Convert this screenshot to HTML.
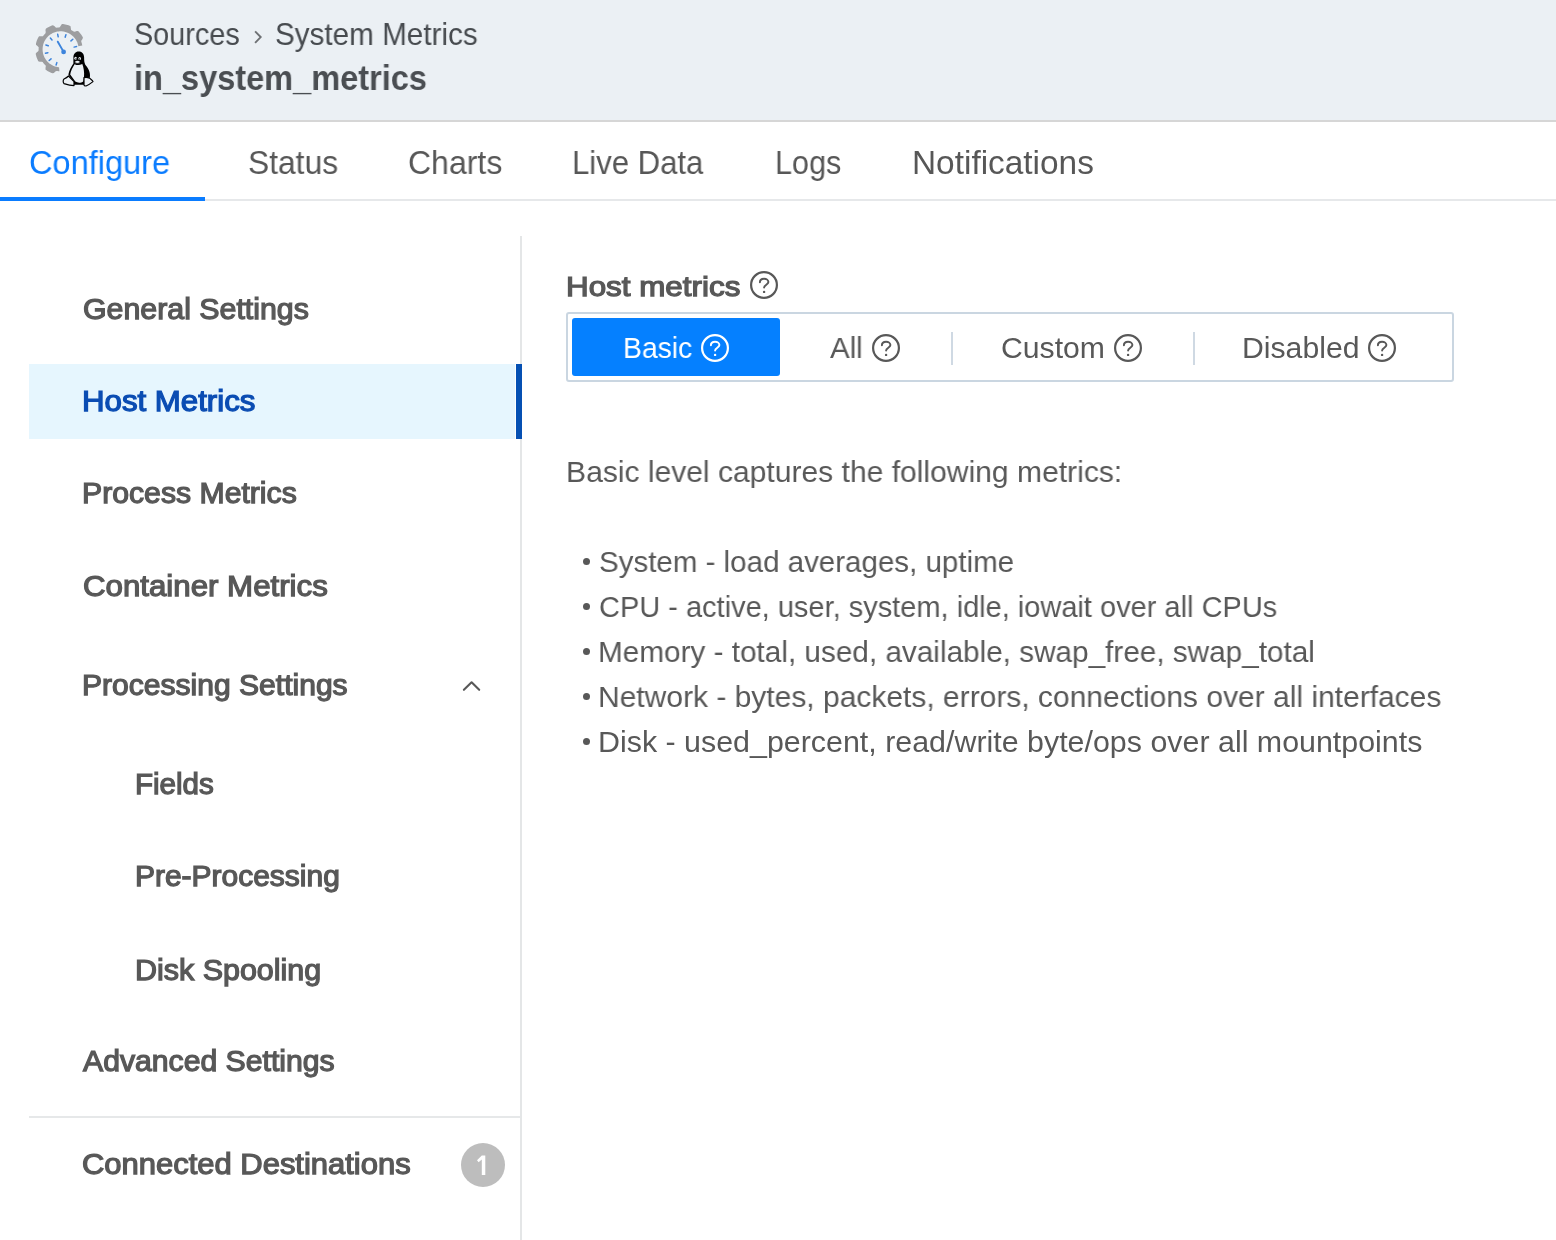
<!DOCTYPE html>
<html><head><meta charset="utf-8"><title>in_system_metrics</title><style>
html,body{margin:0;padding:0;}
body{width:1556px;height:1240px;position:relative;overflow:hidden;background:#fff;font-family:"Liberation Sans",sans-serif;}
.a{position:absolute;white-space:nowrap;line-height:1;transform-origin:0 0;will-change:transform;}
.r{position:absolute;}
.q{position:absolute;}
</style></head><body>
<div class="r" style="left:0px;top:0px;width:1556px;height:120px;background:#ebf0f4;"></div>
<div class="r" style="left:0px;top:120px;width:1556px;height:2px;background:#d6d6d6;"></div>
<div class="r" style="left:0px;top:199px;width:1556px;height:2px;background:#e6e8ea;"></div>
<div class="r" style="left:0px;top:197px;width:205px;height:4px;background:#0a7cff;"></div>
<div class="r" style="left:520px;top:236px;width:2px;height:1004px;background:#e4e6e7;"></div>
<div class="r" style="left:29px;top:364px;width:486px;height:75px;background:#e6f6fe;"></div>
<div class="r" style="left:516px;top:364px;width:6px;height:75px;background:#0550b3;"></div>
<div class="r" style="left:29px;top:1116px;width:491px;height:2px;background:#e6e8e9;"></div>
<div class="r" style="left:461px;top:1143px;width:44px;height:44px;background:#bdbdbd;border-radius:50%;"></div>
<div class="r" style="left:566px;top:312px;width:884px;height:66px;background:transparent;border:2px solid #cad6e1;border-radius:3px;"></div>
<div class="r" style="left:572px;top:318px;width:208px;height:58px;background:#0580ff;border-radius:3px;"></div>
<div class="r" style="left:951px;top:332px;width:2px;height:33px;background:#cfd9e3;"></div>
<div class="r" style="left:1193px;top:332px;width:2px;height:33px;background:#cfd9e3;"></div>
<div class="a" style="left:134.3px;top:19.0px;font-size:30.5px;font-weight:400;color:#474b4f;transform:scaleX(0.9444)">Sources</div>
<div class="a" style="left:274.5px;top:19.0px;font-size:30.5px;font-weight:400;color:#474b4f;transform:scaleX(0.9722)">System Metrics</div>
<div class="a" style="left:133.5px;top:59.9px;font-size:35.2px;font-weight:700;color:#4a4e52;transform:scaleX(0.9245)">in_system_metrics</div>
<div class="a" style="left:29.1px;top:146.2px;font-size:33.4px;font-weight:400;color:#0a7cff;transform:scaleX(0.9746)">Configure</div>
<div class="a" style="left:248.4px;top:146.2px;font-size:33.4px;font-weight:400;color:#575757;transform:scaleX(0.9519)">Status</div>
<div class="a" style="left:408.2px;top:146.2px;font-size:33.4px;font-weight:400;color:#575757;transform:scaleX(0.9591)">Charts</div>
<div class="a" style="left:572.1px;top:146.2px;font-size:33.4px;font-weight:400;color:#575757;transform:scaleX(0.9308)">Live Data</div>
<div class="a" style="left:775.0px;top:146.2px;font-size:33.4px;font-weight:400;color:#575757;transform:scaleX(0.9156)">Logs</div>
<div class="a" style="left:911.6px;top:146.2px;font-size:33.4px;font-weight:400;color:#575757;transform:scaleX(0.9976)">Notifications</div>
<div class="a" style="left:82.6px;top:294.9px;font-size:28.6px;font-weight:400;color:#585858;-webkit-text-stroke:1.25px #585858;transform:scaleX(1.0604)">General Settings</div>
<div class="a" style="left:82.0px;top:387.3px;font-size:28.7px;font-weight:400;color:#0b4db3;-webkit-text-stroke:1.25px #0b4db3;transform:scaleX(1.0876)">Host Metrics</div>
<div class="a" style="left:82.1px;top:479.1px;font-size:28.6px;font-weight:400;color:#585858;-webkit-text-stroke:1.25px #585858;transform:scaleX(1.0561)">Process Metrics</div>
<div class="a" style="left:83.0px;top:571.8px;font-size:28.6px;font-weight:400;color:#585858;-webkit-text-stroke:1.25px #585858;transform:scaleX(1.0924)">Container Metrics</div>
<div class="a" style="left:81.5px;top:671.1px;font-size:28.6px;font-weight:400;color:#585858;-webkit-text-stroke:1.25px #585858;transform:scaleX(1.0512)">Processing Settings</div>
<div class="a" style="left:134.5px;top:770.1px;font-size:28.7px;font-weight:400;color:#585858;-webkit-text-stroke:1.25px #585858;transform:scaleX(1.0299)">Fields</div>
<div class="a" style="left:134.5px;top:861.8px;font-size:28.6px;font-weight:400;color:#585858;-webkit-text-stroke:1.25px #585858;transform:scaleX(1.0478)">Pre-Processing</div>
<div class="a" style="left:134.5px;top:955.8px;font-size:28.7px;font-weight:400;color:#585858;-webkit-text-stroke:1.25px #585858;transform:scaleX(1.0614)">Disk Spooling</div>
<div class="a" style="left:82.9px;top:1047.3px;font-size:28.7px;font-weight:400;color:#585858;-webkit-text-stroke:1.25px #585858;transform:scaleX(1.052)">Advanced Settings</div>
<div class="a" style="left:82.4px;top:1150.1px;font-size:28.6px;font-weight:400;color:#585858;-webkit-text-stroke:1.25px #585858;transform:scaleX(1.0825)">Connected Destinations</div>
<div class="a" style="left:565.8px;top:272.6px;font-size:27.7px;font-weight:400;color:#585858;-webkit-text-stroke:1.25px #585858;transform:scaleX(1.1331)">Host metrics</div>
<div class="a" style="left:622.5px;top:333.2px;font-size:30.2px;font-weight:400;color:#ffffff;transform:scaleX(0.9371)">Basic</div>
<div class="a" style="left:830.4px;top:333.2px;font-size:30.2px;font-weight:400;color:#585858;transform:scaleX(0.9755)">All</div>
<div class="a" style="left:1001.2px;top:333.2px;font-size:30.2px;font-weight:400;color:#585858;transform:scaleX(0.9978)">Custom</div>
<div class="a" style="left:1242.3px;top:333.2px;font-size:30.2px;font-weight:400;color:#585858;transform:scaleX(0.9988)">Disabled</div>
<div class="a" style="left:566.1px;top:457.0px;font-size:30.2px;font-weight:400;color:#585858;transform:scaleX(0.9955)">Basic level captures the following metrics:</div>
<div class="a" style="left:598.5px;top:546.0px;font-size:30.4px;font-weight:400;color:#585858;transform:scaleX(0.9712)">System - load averages, uptime</div>
<div class="a" style="left:598.5px;top:591.0px;font-size:30.4px;font-weight:400;color:#585858;transform:scaleX(0.9539)">CPU - active, user, system, idle, iowait over all CPUs</div>
<div class="a" style="left:597.5px;top:636.0px;font-size:30.4px;font-weight:400;color:#585858;transform:scaleX(0.9779)">Memory - total, used, available, swap_free, swap_total</div>
<div class="a" style="left:597.5px;top:681.0px;font-size:30.4px;font-weight:400;color:#585858;transform:scaleX(0.9868)">Network - bytes, packets, errors, connections over all interfaces</div>
<div class="a" style="left:597.5px;top:726.0px;font-size:30.4px;font-weight:400;color:#585858;transform:scaleX(1.0001)">Disk - used_percent, read/write byte/ops over all mountpoints</div>
<svg class="q" style="left:252px;top:29px" width="12" height="16" viewBox="0 0 12 16"><path d="M3.1 2.3 L8.7 8.1 L3.1 13.9" fill="none" stroke="#6e7174" stroke-width="1.9"/></svg>
<svg class="q" style="left:460px;top:677px" width="24" height="16" viewBox="0 0 24 16"><path d="M3.9 12.8 L11.6 5.3 L19.2 12.8" fill="none" stroke="#585858" stroke-width="2.1" stroke-linecap="round" stroke-linejoin="round"/></svg>
<svg class="q" style="left:470px;top:1150px" width="26" height="30" viewBox="0 0 26 30"><path d="M11.8 5.6 L15.3 5.6 L15.3 25 L11.8 25 L11.8 9.6 L8.6 12.2 L7 10.2 Z" fill="#fff"/></svg>
<div class="r" style="left:582.8px;top:557.8px;width:7px;height:7px;border-radius:50%;background:#585858"></div>
<div class="r" style="left:582.8px;top:602.8px;width:7px;height:7px;border-radius:50%;background:#585858"></div>
<div class="r" style="left:582.8px;top:647.8px;width:7px;height:7px;border-radius:50%;background:#585858"></div>
<div class="r" style="left:582.8px;top:692.8px;width:7px;height:7px;border-radius:50%;background:#585858"></div>
<div class="r" style="left:582.8px;top:737.8px;width:7px;height:7px;border-radius:50%;background:#585858"></div>
<svg class="q" style="left:750.1px;top:271.1px" width="28" height="28" viewBox="0 0 28 28"><circle cx="14" cy="14" r="12.9" fill="none" stroke="#585858" stroke-width="2.2"/><path d="M9.9 11.3 C9.9 9.2 11.7 7.7 14.1 7.7 C16.5 7.7 18.4 9.2 18.4 11.1 C18.4 13.5 14.1 14 14.1 16.6" fill="none" stroke="#585858" stroke-width="1.95" stroke-linecap="round"/><circle cx="14.1" cy="20.9" r="1.2" fill="#585858"/></svg>
<svg class="q" style="left:701px;top:333.6px" width="28" height="28" viewBox="0 0 28 28"><circle cx="14" cy="14" r="12.9" fill="none" stroke="#ffffff" stroke-width="2.2"/><path d="M9.9 11.3 C9.9 9.2 11.7 7.7 14.1 7.7 C16.5 7.7 18.4 9.2 18.4 11.1 C18.4 13.5 14.1 14 14.1 16.6" fill="none" stroke="#ffffff" stroke-width="1.95" stroke-linecap="round"/><circle cx="14.1" cy="20.9" r="1.2" fill="#ffffff"/></svg>
<svg class="q" style="left:872px;top:333.6px" width="28" height="28" viewBox="0 0 28 28"><circle cx="14" cy="14" r="12.9" fill="none" stroke="#585858" stroke-width="2.2"/><path d="M9.9 11.3 C9.9 9.2 11.7 7.7 14.1 7.7 C16.5 7.7 18.4 9.2 18.4 11.1 C18.4 13.5 14.1 14 14.1 16.6" fill="none" stroke="#585858" stroke-width="1.95" stroke-linecap="round"/><circle cx="14.1" cy="20.9" r="1.2" fill="#585858"/></svg>
<svg class="q" style="left:1114px;top:333.6px" width="28" height="28" viewBox="0 0 28 28"><circle cx="14" cy="14" r="12.9" fill="none" stroke="#585858" stroke-width="2.2"/><path d="M9.9 11.3 C9.9 9.2 11.7 7.7 14.1 7.7 C16.5 7.7 18.4 9.2 18.4 11.1 C18.4 13.5 14.1 14 14.1 16.6" fill="none" stroke="#585858" stroke-width="1.95" stroke-linecap="round"/><circle cx="14.1" cy="20.9" r="1.2" fill="#585858"/></svg>
<svg class="q" style="left:1368px;top:333.6px" width="28" height="28" viewBox="0 0 28 28"><circle cx="14" cy="14" r="12.9" fill="none" stroke="#585858" stroke-width="2.2"/><path d="M9.9 11.3 C9.9 9.2 11.7 7.7 14.1 7.7 C16.5 7.7 18.4 9.2 18.4 11.1 C18.4 13.5 14.1 14 14.1 16.6" fill="none" stroke="#585858" stroke-width="1.95" stroke-linecap="round"/><circle cx="14.1" cy="20.9" r="1.2" fill="#585858"/></svg>
<svg class="q" style="left:0;top:0" width="110" height="100" viewBox="0 0 110 100">
<path d="M82.27 45.48 L82.07 44.51 L81.84 43.55 L81.56 42.61 L81.24 41.67 L81.39 40.54 L82.51 38.89 L82.94 37.43 L82.39 36.44 L81.79 35.47 L81.15 34.54 L80.46 33.63 L79.74 32.76 L78.98 31.91 L78.18 31.11 L76.67 31.10 L74.77 31.72 L73.63 31.57 L72.82 31.01 L71.99 30.48 L71.13 29.98 L70.83 28.36 L70.55 26.37 L69.62 25.66 L68.55 25.28 L67.47 24.95 L66.37 24.67 L65.26 24.43 L64.14 24.25 L63.01 24.12 L61.88 24.10 L60.74 25.76 L59.74 27.32 L58.76 27.38 L57.77 27.48 L56.80 27.63 L55.76 27.49 L54.34 26.09 L52.92 25.19 L51.85 25.56 L50.80 25.98 L49.76 26.44 L48.75 26.95 L47.76 27.50 L46.79 28.10 L45.85 28.74 L45.45 30.06 L45.71 32.04 L45.50 33.30 L44.79 34.00 L44.12 34.72 L43.49 35.48 L42.88 36.26 L41.10 36.25 L39.09 36.26 L38.40 37.17 L37.88 38.18 L37.40 39.21 L36.97 40.26 L36.59 41.33 L36.26 42.41 L35.97 43.51 L35.96 44.66 L37.45 46.01 L38.70 47.18 L38.63 48.17 L38.60 49.15 L38.62 50.14 L38.18 51.17 L36.60 52.39 L35.68 53.65 L35.90 54.76 L36.17 55.87 L36.49 56.95 L36.85 58.03 L37.27 59.08 L37.73 60.12 L38.24 61.13 L39.62 61.64 L41.62 61.64 L42.71 62.11 L43.30 62.90 L43.93 63.66 L44.59 64.39 L45.28 65.09 L45.81 65.99 L45.51 67.95 L45.58 69.66 L46.51 70.31 L47.47 70.92 L48.45 71.49 L49.46 72.01 L50.49 72.49 L51.54 72.92 L52.61 73.30 L53.90 72.91 L55.35 71.53 L56.51 70.92 L57.48 71.08 L58.46 71.20 L59.45 71.27 L59.05 67.23 L58.25 67.15 L57.45 67.02 L56.66 66.86 L55.88 66.67 L55.10 66.44 L54.34 66.18 L53.59 65.88 L52.85 65.55 L52.13 65.18 L51.43 64.79 L50.74 64.36 L50.08 63.91 L49.43 63.42 L48.81 62.90 L48.21 62.36 L47.64 61.79 L47.09 61.20 L46.57 60.58 L46.08 59.94 L45.62 59.28 L45.19 58.60 L44.79 57.90 L44.42 57.18 L44.08 56.45 L43.78 55.70 L43.51 54.94 L43.27 54.17 L43.07 53.38 L42.90 52.59 L42.77 51.80 L42.68 50.99 L42.62 50.19 L42.60 49.38 L42.61 48.58 L42.67 47.77 L42.75 46.97 L42.87 46.17 L43.03 45.38 L43.23 44.59 L43.45 43.82 L43.72 43.06 L44.01 42.31 L44.35 41.57 L44.71 40.85 L45.10 40.14 L45.53 39.46 L45.99 38.79 L46.47 38.15 L46.99 37.52 L47.53 36.93 L48.10 36.35 L48.69 35.80 L49.31 35.28 L49.95 34.79 L50.61 34.33 L51.29 33.90 L51.99 33.49 L52.71 33.12 L53.44 32.79 L54.19 32.48 L54.95 32.21 L55.72 31.97 L56.50 31.77 L57.29 31.61 L58.09 31.48 L58.89 31.38 L59.69 31.32 L60.50 31.30 L61.31 31.31 L62.11 31.36 L62.92 31.45 L63.72 31.57 L64.51 31.73 L65.29 31.92 L66.07 32.15 L66.83 32.41 L67.58 32.71 L68.32 33.04 L69.04 33.40 L69.74 33.80 L70.43 34.22 L71.10 34.68 L71.74 35.16 L72.36 35.68 L72.96 36.22 L73.54 36.78 L74.08 37.38 L74.61 37.99 L75.10 38.63 L75.56 39.29 L76.00 39.97 L76.40 40.67 L76.77 41.39 L77.11 42.12 L77.41 42.87 L77.68 43.63 L77.92 44.40 L78.12 45.19 L78.29 45.98 L78.33 46.17 Z" fill="#9d9ea0"/>
<path d="M74.11 47.11 L76.55 46.59 M70.96 40.93 L72.82 39.26 M65.14 37.16 L65.91 34.78 M58.21 36.79 L57.69 34.35 M52.03 39.94 L50.36 38.08 M48.26 45.76 L45.88 44.99 M47.89 52.69 L45.45 53.21 M51.04 58.87 L49.18 60.54 M56.86 62.64 L56.09 65.02" stroke="#3d84dc" stroke-width="1.5" stroke-linecap="round"/>
<path d="M63.6 51.9 L57.8 41.7" stroke="#3d84dc" stroke-width="1.9" stroke-linecap="round"/>
<circle cx="63.6" cy="51.9" r="2.4" fill="#3d84dc"/>
<g transform="translate(58 48)">
<path d="M20.5 3.4 C17.6 3.4 15.4 5.8 15.4 9.5 L15.4 15.4 C13.3 18.6 10.9 22.6 10.4 26.6 L15.9 34.2 L15.9 36.8 L26.2 36.8 L26.2 29.3 L31.6 30.6 C32.8 26.2 31.4 21.3 27.3 16.8 C26.2 14.8 26.1 12 26.1 9.1 C26.1 5.4 23.6 3.4 20.5 3.4 Z" fill="#000"/>
<path d="M16.6 16.2 C14.7 19.2 12.6 23 12.2 26.5 L17.3 33.6 C19.5 35.2 23.2 35.2 25.4 33.2 L26 28.4 C26.5 24.2 25.6 19.4 24.3 16 C21.6 17.4 19.1 17.4 16.6 16.2 Z" fill="#ebf0f4"/>
<ellipse cx="17.6" cy="10.2" rx="1.3" ry="1.5" fill="#ebf0f4"/>
<ellipse cx="21.7" cy="10.5" rx="1.3" ry="1.5" fill="#ebf0f4"/>
<ellipse cx="18.1" cy="10.8" rx="0.6" ry="0.8" fill="#000"/>
<ellipse cx="21.4" cy="11.0" rx="0.6" ry="0.8" fill="#000"/>
<ellipse cx="19.4" cy="13.9" rx="2.7" ry="1.5" fill="#ebf0f4" stroke="#000" stroke-width="0.7"/>
<path d="M6 31 C8 30.2 9.4 29.2 10.5 28 L16 33.6 L16 37.6 C13 37.6 9 36.6 6 35.6 C4.9 34.6 4.9 32 6 31 Z" fill="#ebf0f4" stroke="#000" stroke-width="1.2" stroke-linejoin="round"/>
<path d="M26 29.6 C28 29 30 29.4 31.6 30.2 C33 31.6 34.6 32.6 35 33.6 C33 35.2 30 37.2 28 38 C27 38 26 37.6 26 37 Z" fill="#ebf0f4" stroke="#000" stroke-width="1.2" stroke-linejoin="round"/>
</g>
</svg>
</body></html>
